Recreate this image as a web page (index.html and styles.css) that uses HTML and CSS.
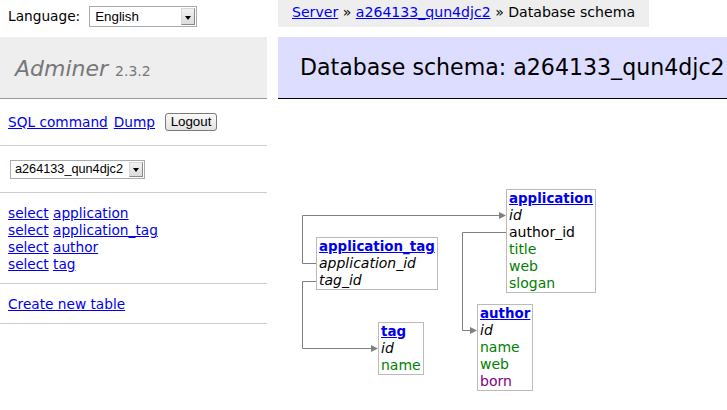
FILE: index.html
```html
<!DOCTYPE html>
<html lang="en">
<head>
<meta charset="utf-8">
<title>Database schema: a264133_qun4djc2 - Adminer</title>
<link rel="stylesheet" href="styles.css">
</head>
<body>
<div class="page">
  <aside class="side">
    <form class="lang">
      <label class="lang-label" for="lang">Language:</label>
      <span class="sel-wrap sel-lang"><select id="lang" class="sel"><option>English</option></select></span>
    </form>
    <h1 class="logo"><a href="#" class="logo-link">Adminer</a> <span class="version">2.3.2</span></h1>
    <p class="menu-row row-actions">
      <a href="#">SQL command</a>
      <a href="#">Dump</a>
      <button type="button" class="btn">Logout</button>
    </p>
    <p class="menu-row row-db">
      <span class="sel-wrap sel-db"><select class="sel"><option>a264133_qun4djc2</option></select></span>
    </p>
    <p class="menu-row row-tables">
      <a href="#">select</a> <a href="#">application</a><br>
      <a href="#">select</a> <a href="#">application_tag</a><br>
      <a href="#">select</a> <a href="#">author</a><br>
      <a href="#">select</a> <a href="#">tag</a>
    </p>
    <p class="menu-row row-create">
      <a href="#">Create new table</a>
    </p>
  </aside>
  <main class="content">
    <p class="breadcrumb"><a href="#">Server</a> » <a href="#">a264133_qun4djc2</a> » Database schema</p>
    <h2 class="title">Database schema: a264133_qun4djc2</h2>
    <div class="schema">
      <svg class="links" width="449" height="311" viewBox="0 0 449 311">
        <g fill="none" stroke="#808080" stroke-width="1">
          <path d="M38 164.5 H24.5 V116.5 H222"/>
          <path d="M38 182.5 H24.5 V249.5 H94"/>
          <path d="M228 133.5 H184.5 V231.5 H193"/>
        </g>
        <g fill="#808080">
          <polygon points="221,113 228,116.5 221,120"/>
          <polygon points="93,246 100,249.5 93,253"/>
          <polygon points="192,228 199,231.5 192,235"/>
        </g>
      </svg>
      <div class="tbl t-application">
        <a href="#" class="tname">application</a>
        <span class="col key">id</span>
        <span class="col">author_id</span>
        <span class="col str">title</span>
        <span class="col str">web</span>
        <span class="col str">slogan</span>
      </div>
      <div class="tbl t-apptag">
        <a href="#" class="tname">application_tag</a>
        <span class="col key">application_id</span>
        <span class="col key">tag_id</span>
      </div>
      <div class="tbl t-tag">
        <a href="#" class="tname">tag</a>
        <span class="col key">id</span>
        <span class="col str">name</span>
      </div>
      <div class="tbl t-author">
        <a href="#" class="tname">author</a>
        <span class="col key">id</span>
        <span class="col str">name</span>
        <span class="col str">web</span>
        <span class="col date">born</span>
      </div>
    </div>
  </main>
</div>
</body>
</html>
```
FILE: styles.css
```css
html, body {
  margin: 0;
  padding: 0;
  background: #fff;
}
body {
  font-family: "DejaVu Sans", Verdana, sans-serif;
  font-size: 13.7px;
  line-height: 17px;
  color: #000;
}
a {
  color: #0000ee;
  text-decoration: underline;
}
.page {
  display: flex;
  align-items: flex-start;
}
.side {
  width: 267px;
  flex: none;
}
.lang {
  height: 37px;
  box-sizing: border-box;
  padding: 6px 8px 0;
  margin: 0;
  display: flex;
  align-items: flex-start;
  gap: 9px;
}
.lang-label {
  line-height: 21px;
}
.sel-wrap {
  position: relative;
  display: inline-block;
}
.sel {
  appearance: none;
  -webkit-appearance: none;
  display: block;
  margin: 0;
  box-sizing: border-box;
  border: 1px solid #a5acb2;
  border-radius: 0;
  background: #fff;
  font-family: "Liberation Sans", Arial, sans-serif;
  font-size: 13.33px;
  color: #000;
  padding: 0 0 0 5px;
}
.sel-lang .sel {
  width: 108px;
  height: 21px;
}
.sel-db .sel {
  width: 135px;
  height: 19px;
  padding-left: 4px;
  font-size: 12.7px;
}
.sel-wrap::before {
  content: "";
  position: absolute;
  right: 2px;
  top: 2px;
  bottom: 2px;
  width: 14px;
  box-sizing: border-box;
  border: 1px solid #8a8a8a;
  border-top-color: #d8d8d8;
  border-left-color: #d8d8d8;
  background: linear-gradient(#f2f2f2, #dcdcdc);
  pointer-events: none;
}
.sel-wrap::after {
  content: "";
  position: absolute;
  right: 6px;
  top: 50%;
  margin-top: -1px;
  border-left: 3.5px solid transparent;
  border-right: 3.5px solid transparent;
  border-top: 4px solid #000;
  pointer-events: none;
}
.logo {
  margin: 0;
  height: 62px;
  box-sizing: border-box;
  padding: 19px 15px 0;
  background: #eee;
  border-bottom: 1px solid #999;
  font-weight: normal;
  font-size: 22px;
  line-height: 26px;
  color: #777;
  white-space: nowrap;
}
.logo-link {
  color: #777;
  font-style: italic;
  text-decoration: none;
}
.version {
  font-size: 14px;
  line-height: 14px;
  color: #777;
}
.menu-row {
  margin: 0;
  padding: 11px 8px;
  border-bottom: 1px solid #ccc;
}
.row-tables,
.row-create {
  padding: 12px 8px 10px;
}
.row-actions {
  height: 24px;
  display: flex;
  align-items: center;
  gap: 6px;
}
.row-db {
  height: 24px;
  display: flex;
  align-items: center;
  padding-left: 10px;
}
.btn {
  margin: 0 0 0 4px;
  height: 18px;
  width: 52px;
  padding: 0;
  font-family: "Liberation Sans", Arial, sans-serif;
  font-size: 13.33px;
  line-height: 16px;
  color: #000;
  border: 1px solid #7a7a7a;
  border-radius: 3px;
  background: linear-gradient(#fafafa, #e2e2e2);
}
.content {
  flex: 1;
  min-width: 0;
  margin-left: 11px;
}
.breadcrumb {
  display: inline-block;
  margin: 0;
  height: 27px;
  box-sizing: border-box;
  padding: 4px 14px 0;
  background: #eee;
  white-space: nowrap;
  vertical-align: top;
  font-size: 14.1px;
}
.title {
  margin: 10px 0 0;
  height: 62px;
  box-sizing: border-box;
  padding: 17px 22px 0;
  background: #ddf;
  border-bottom: 1px solid #000;
  font-weight: normal;
  font-size: 22.1px;
  line-height: 26px;
  white-space: nowrap;
}
.schema {
  position: relative;
  height: 311px;
}
.links {
  position: absolute;
  left: 0;
  top: 0;
}
.tbl {
  position: absolute;
  border: 1px solid #bbb;
  padding: 0 2px;
  background: #fff;
  white-space: nowrap;
}
.tname {
  display: block;
  font-weight: bold;
  font-size: 13.4px;
}
.col {
  display: block;
  font-size: 14px;
}
.key {
  font-style: italic;
}
.str {
  color: #008000;
}
.date {
  color: #800080;
}
.t-application {
  left: 228px;
  top: 90px;
}
.t-apptag {
  left: 38px;
  top: 138px;
}
.t-tag {
  left: 100px;
  top: 223px;
}
.t-author {
  left: 199px;
  top: 205px;
}
```
